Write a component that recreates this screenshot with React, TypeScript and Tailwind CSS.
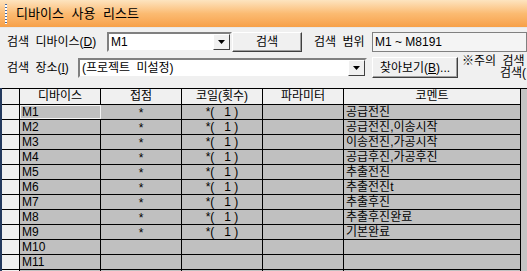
import React from 'react';

const FONT = { fontFamily: '"Liberation Sans", "Noto Sans CJK KR", sans-serif' };

const rows = [
  { dev: 'M1', contact: '*', coil: '*(   1 )', comment: '공급전진' },
  { dev: 'M2', contact: '*', coil: '*(   1 )', comment: '공급전진,이송시작' },
  { dev: 'M3', contact: '*', coil: '*(   1 )', comment: '이송전진,가공시작' },
  { dev: 'M4', contact: '*', coil: '*(   1 )', comment: '공급후진,가공후진' },
  { dev: 'M5', contact: '*', coil: '*(   1 )', comment: '추출전진' },
  { dev: 'M6', contact: '*', coil: '*(   1 )', comment: '추출전진t' },
  { dev: 'M7', contact: '*', coil: '*(   1 )', comment: '추출후진' },
  { dev: 'M8', contact: '*', coil: '*(   1 )', comment: '추출후진완료' },
  { dev: 'M9', contact: '*', coil: '*(   1 )', comment: '기본완료' },
  { dev: 'M10', contact: '', coil: '', comment: '' },
  { dev: 'M11', contact: '', coil: '', comment: '' },
  { dev: '', contact: '', coil: '', comment: '' },
];

function DropArrow() {
  return (
    <div className="w-[17px] h-full flex items-center justify-center bg-[#f0f0f0] border border-t-white border-l-white border-r-[#404040] border-b-[#404040]">
      <svg width="7" height="4" viewBox="0 0 7 4">
        <path d="M0 0H7L3.5 4Z" fill="#000" />
      </svg>
    </div>
  );
}

function Combo({ value, className }: { value: string; className: string }) {
  return (
    <div className={`flex h-[20px] bg-white border-2 border-t-[#808080] border-l-[#808080] border-r-[#f0f0f0] border-b-[#f0f0f0] ${className}`}>
      <div className="flex-1 pl-[2px] text-[12px] leading-[16px] text-black whitespace-pre [word-spacing:3px]">{value}</div>
      <DropArrow />
    </div>
  );
}

function Button({ label, className }: { label: React.ReactNode; className: string }) {
  return (
    <div className={`flex items-center justify-center bg-[#f0f0f0] border border-t-white border-l-white border-r-[#404040] border-b-[#404040] shadow-[inset_-1px_-1px_0_#a0a0a0] text-[12px] text-black ${className}`}>
      {label}
    </div>
  );
}

export default function App() {
  return (
    <div className="w-[527px] h-[271px] bg-[#f0f0f0] overflow-hidden flex flex-col" style={FONT}>
      {/* Title */}
      <div className="shrink-0 h-[28px] flex items-center bg-gradient-to-b from-[#fde4bf] via-[#fbbb72] to-[#f7a048] border-b border-[#e8e8e8]">
        <div className="ml-[5px] w-[2px] h-[20px] bg-[repeating-linear-gradient(to_bottom,#4a6aa0_0px,#4a6aa0_1px,#ffffff_1px,#ffffff_3px)]" />
        <span className="ml-[9px] text-[13px] text-black [word-spacing:4px]">디바이스 사용 리스트</span>
      </div>

      {/* Row 1 */}
      <div className="shrink-0 mt-[4px] h-[20px] flex items-center">
        <span className="w-[107px] pl-[7px] text-[12px] text-black whitespace-nowrap [word-spacing:3px]">검색 디바이스(<u>D</u>)</span>
        <Combo value="M1" className="w-[125px]" />
        <Button label="검색" className="w-[70px] h-[20px]" />
        <span className="ml-[12px] w-[58px] text-[12px] text-black whitespace-nowrap [word-spacing:3px]">검색 범위</span>
        <div className="flex-1 h-[20px] bg-[#f4f4f4] border border-[#808080] pl-[2px] text-[12px] leading-[18px] text-black whitespace-nowrap">M1 ~ M8191</div>
      </div>

      {/* Row 2 */}
      <div className="shrink-0 mt-[5px] h-[21px] flex items-center">
        <span className="w-[78px] pl-[7px] text-[12px] text-black whitespace-nowrap [word-spacing:3px]">검색 장소(<u>I</u>)</span>
        <Combo value="(프로젝트 미설정)" className="w-[289px]" />
        <Button label={<span>찾아보기(<u>B</u>)...</span>} className="ml-[5px] w-[86px] h-[21px]" />
        <div className="ml-[4px] self-start -mt-[2px] flex-1 text-[12px] leading-[12px] text-black whitespace-nowrap [word-spacing:3px]">
          <div className="h-[12px]">※주의 검색</div>
          <div className="h-[12px] pl-[38px]">검색(</div>
        </div>
      </div>

      {/* Grid */}
      <div className="mt-[10px] flex-1 min-h-0 overflow-hidden flex border-l-2 border-[#243a5e]">
        <div className="w-[519px] border-t border-black text-[12px] text-black">
          <div className="flex h-[16px] bg-[#f0f0f0] border-b border-black">
            <div className="w-[18px] border-r border-black" />
            <div className="w-[81px] border-r border-black text-center leading-[15px]">디바이스</div>
            <div className="w-[81px] border-r border-black text-center leading-[15px]">접점</div>
            <div className="w-[81px] border-r border-black text-center leading-[15px]">코일(횟수)</div>
            <div className="w-[81px] border-r border-black text-center leading-[15px]">파라미터</div>
            <div className="w-[177px] border-r border-black text-center leading-[15px]">코멘트</div>
          </div>
          {rows.map((r, i) => (
            <div key={i} className="flex h-[15px] border-b border-black">
              <div className="w-[18px] bg-[#f0f0f0] border-r border-black" />
              <div className={`w-[81px] bg-[#c0c0c0] border-r border-black pl-[2px] leading-[14px] ${i === 0 ? 'outline outline-1 -outline-offset-1 outline-[#f4f4f4]' : ''}`}>{r.dev}</div>
              <div className="w-[81px] bg-[#c0c0c0] border-r border-black text-center leading-[16px]">{r.contact}</div>
              <div className="w-[81px] bg-[#c0c0c0] border-r border-black text-center leading-[14px] whitespace-pre">{r.coil}</div>
              <div className="w-[81px] bg-[#c0c0c0] border-r border-black" />
              <div className="w-[177px] bg-[#c0c0c0] border-r border-black pl-[2px] leading-[14px] whitespace-nowrap overflow-hidden">{r.comment}</div>
            </div>
          ))}
        </div>
        <div className="flex-1 bg-[#c4c4c4] border-t border-black" />
      </div>
    </div>
  );
}
